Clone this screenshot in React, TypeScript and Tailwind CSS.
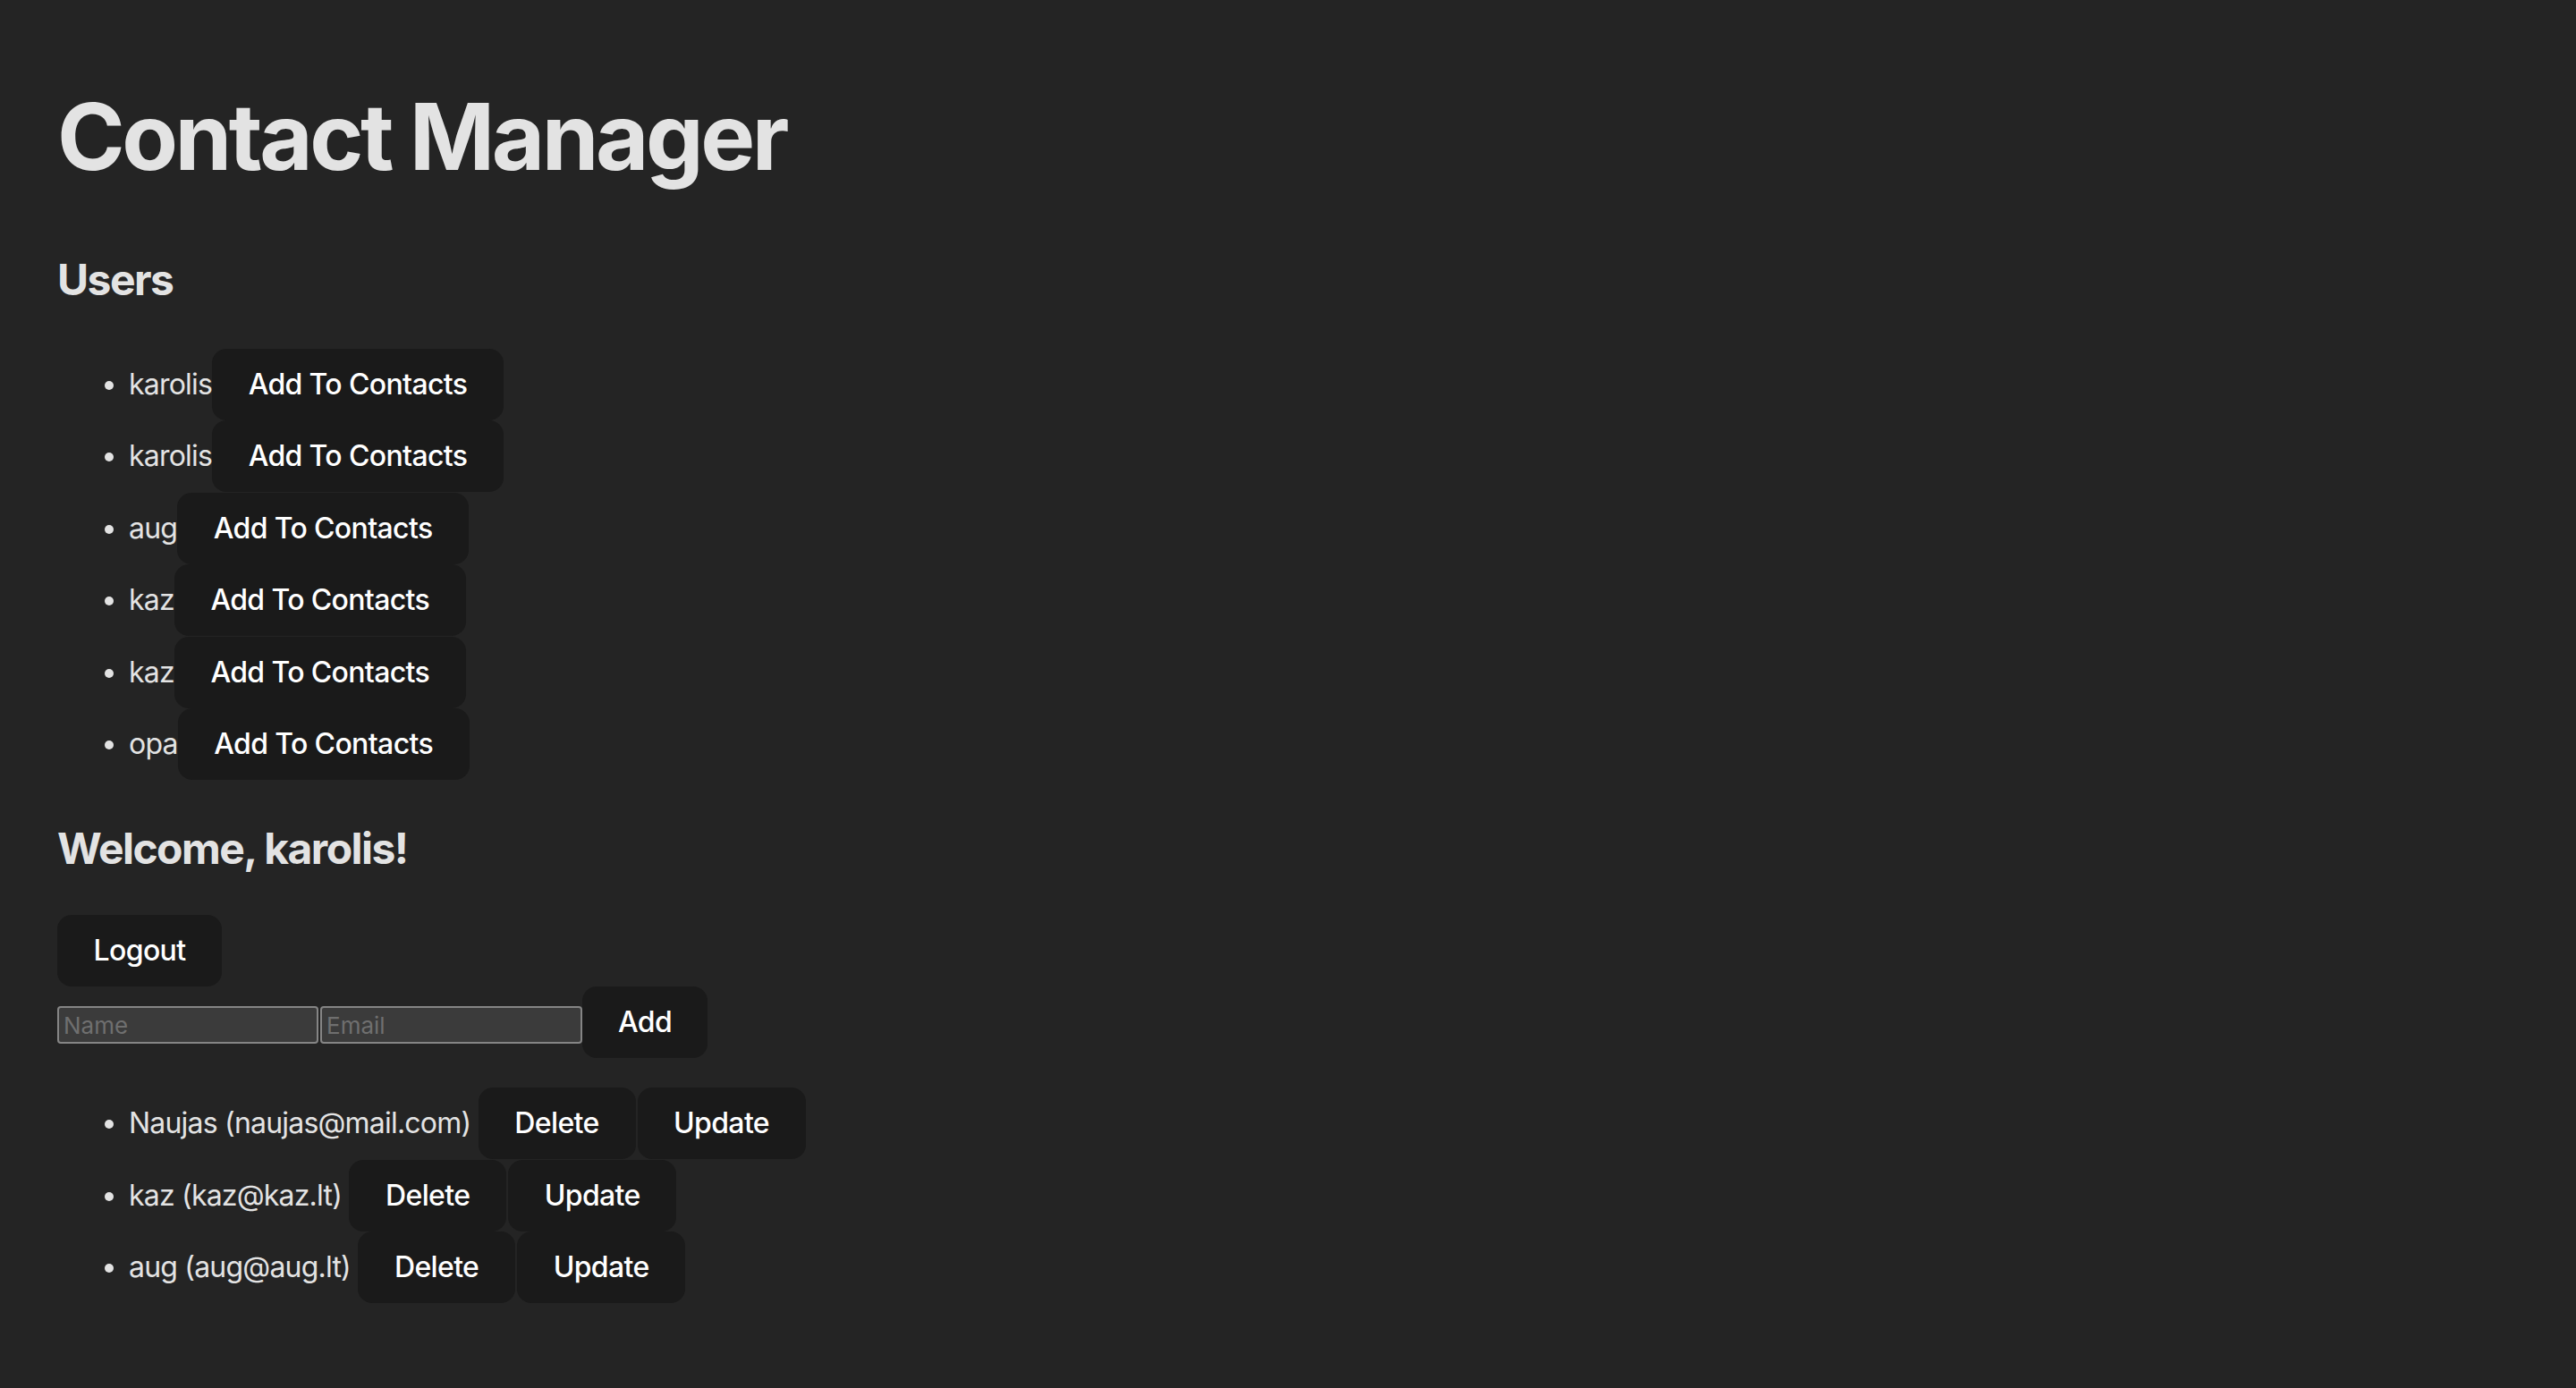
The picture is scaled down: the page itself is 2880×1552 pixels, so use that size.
import React, { useState } from 'react';

type Contact = { id: number; name: string; email: string };

const users = ['karolis', 'karolis', 'aug', 'kaz', 'kaz', 'opa'];

const btn =
  'inline-block align-baseline h-[80px] rounded-[16px] border-2 border-transparent bg-[#1a1a1a] text-white font-medium text-[32px] leading-[76px] text-center tracking-[-0.02em] cursor-pointer';

const App: React.FC = () => {
  const [contacts, setContacts] = useState<Contact[]>([
    { id: 1, name: 'Naujas', email: 'naujas@mail.com' },
    { id: 2, name: 'kaz', email: 'kaz@kaz.lt' },
    { id: 3, name: 'aug', email: 'aug@aug.lt' },
  ]);
  const [name, setName] = useState('');
  const [email, setEmail] = useState('');

  const addContact = () => {
    if (!name || !email) return;
    setContacts([...contacts, { id: Date.now(), name, email }]);
    setName('');
    setEmail('');
  };

  return (
    <div className="min-h-screen bg-[#242424] text-[#e3e3e3] px-[64px] pt-[97px] font-['Inter','Liberation_Sans',sans-serif] text-[32px] leading-normal tracking-[-0.025em]">
      <h1 className="text-[102.4px] font-bold leading-[112px] tracking-[-0.034em]">Contact Manager</h1>

      {/* users */}
      <h2 className="mt-[75px] text-[48px] font-bold leading-[58px] tracking-[-0.032em]">Users</h2>
      <ul className="mt-[48px] list-disc pl-[80px]">
        {users.map((u, i) => (
          <li key={i} className="h-[80.4px]">
            {u}
            <button className={`${btn} w-[326px]`}>Add To Contacts</button>
          </li>
        ))}
      </ul>

      {/* logged in */}
      <h2 className="mt-[48px] text-[48px] font-bold leading-[58px] tracking-[-0.032em]">Welcome, karolis!</h2>
      <div className="mt-[45px]">
        <button className={`${btn} w-[184px]`}>Logout</button>
      </div>
      <div className="flex items-start">
        <input
          value={name}
          onChange={(e) => setName(e.target.value)}
          placeholder="Name"
          className="mt-[22px] w-[292px] h-[42px] rounded-[4px] border-2 border-[#858585] bg-[#3b3b3b] px-[5px] text-[26px] text-white placeholder:text-[#6f6f6f] outline-none tracking-normal"
        />
        <input
          value={email}
          onChange={(e) => setEmail(e.target.value)}
          placeholder="Email"
          className="mt-[22px] ml-[2px] w-[293px] h-[42px] rounded-[4px] border-2 border-[#858585] bg-[#3b3b3b] px-[5px] text-[26px] text-white placeholder:text-[#6f6f6f] outline-none tracking-normal"
        />
        <button onClick={addContact} className={`${btn} w-[140px]`}>
          Add
        </button>
      </div>

      <ul className="mt-[33px] list-disc pl-[80px] pb-[60px]">
        {contacts.map((c) => (
          <li key={c.id} className="h-[80.4px]">
            {c.name} ({c.email}){' '}
            <button onClick={() => setContacts(contacts.filter((x) => x.id !== c.id))} className={`${btn} w-[176px]`}>
              Delete
            </button>
            <button className={`${btn} ml-[2px] w-[188px]`}>Update</button>
          </li>
        ))}
      </ul>
    </div>
  );
};

export default App;
